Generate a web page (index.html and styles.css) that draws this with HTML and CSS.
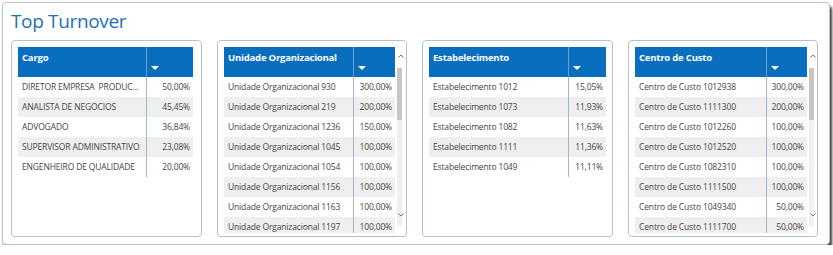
FILE: index.html
```html
<!DOCTYPE html>
<html lang="pt">
<head>
<meta charset="utf-8">
<title>Top Turnover</title>
<link rel="stylesheet" href="styles.css">
</head>
<body>
<div class="panel">
  <h1 class="title">Top Turnover</h1>
  <div class="cards">
    <section class="card c1">
      <div class="view">
        <div class="grid">
          <div class="hd name">Cargo</div><div class="hd sort"><span class="tri"></span></div>
          <div class="cell name">DIRETOR EMPRESA&nbsp; PRODUC...</div><div class="cell val">50,00%</div>
          <div class="cell name alt">ANALISTA DE NEGOCIOS</div><div class="cell val alt">45,45%</div>
          <div class="cell name">ADVOGADO</div><div class="cell val">36,84%</div>
          <div class="cell name alt">SUPERVISOR ADMINISTRATIVO</div><div class="cell val alt">23,08%</div>
          <div class="cell name">ENGENHEIRO DE QUALIDADE</div><div class="cell val">20,00%</div>
        </div>
      </div>
    </section>
    <section class="card c2">
      <div class="view">
        <div class="grid">
          <div class="hd name">Unidade Organizacional</div><div class="hd sort"><span class="tri"></span></div>
          <div class="cell name">Unidade Organizacional 930</div><div class="cell val">300,00%</div>
          <div class="cell name alt">Unidade Organizacional 219</div><div class="cell val alt">200,00%</div>
          <div class="cell name">Unidade Organizacional 1236</div><div class="cell val">150,00%</div>
          <div class="cell name alt">Unidade Organizacional 1045</div><div class="cell val alt">100,00%</div>
          <div class="cell name">Unidade Organizacional 1054</div><div class="cell val">100,00%</div>
          <div class="cell name alt">Unidade Organizacional 1156</div><div class="cell val alt">100,00%</div>
          <div class="cell name">Unidade Organizacional 1163</div><div class="cell val">100,00%</div>
          <div class="cell name alt">Unidade Organizacional 1197</div><div class="cell val alt">100,00%</div>
        </div>
      </div>
      <div class="sbar">
        <svg class="arrow" width="6" height="4" viewBox="0 0 6 4"><path d="M0.5 3.5 L3 1 L5.5 3.5" fill="none" stroke="#777" stroke-width="1"/></svg>
        <div class="track"><div class="thumb"></div>
          <svg class="arrow down" width="6" height="4" viewBox="0 0 6 4"><path d="M0.5 0.5 L3 3 L5.5 0.5" fill="none" stroke="#777" stroke-width="1"/></svg>
        </div>
      </div>
    </section>
    <section class="card c3">
      <div class="view">
        <div class="grid">
          <div class="hd name">Estabelecimento</div><div class="hd sort"><span class="tri"></span></div>
          <div class="cell name">Estabelecimento 1012</div><div class="cell val">15,05%</div>
          <div class="cell name alt">Estabelecimento 1073</div><div class="cell val alt">11,93%</div>
          <div class="cell name">Estabelecimento 1082</div><div class="cell val">11,63%</div>
          <div class="cell name alt">Estabelecimento 1111</div><div class="cell val alt">11,36%</div>
          <div class="cell name">Estabelecimento 1049</div><div class="cell val">11,11%</div>
        </div>
      </div>
    </section>
    <section class="card c4">
      <div class="view">
        <div class="grid">
          <div class="hd name">Centro de Custo</div><div class="hd sort"><span class="tri"></span></div>
          <div class="cell name">Centro de Custo 1012938</div><div class="cell val">300,00%</div>
          <div class="cell name alt">Centro de Custo 1111300</div><div class="cell val alt">200,00%</div>
          <div class="cell name">Centro de Custo 1012260</div><div class="cell val">100,00%</div>
          <div class="cell name alt">Centro de Custo 1012520</div><div class="cell val alt">100,00%</div>
          <div class="cell name">Centro de Custo 1082310</div><div class="cell val">100,00%</div>
          <div class="cell name alt">Centro de Custo 1111500</div><div class="cell val alt">100,00%</div>
          <div class="cell name">Centro de Custo 1049340</div><div class="cell val">50,00%</div>
          <div class="cell name alt">Centro de Custo 1111700</div><div class="cell val alt">50,00%</div>
        </div>
      </div>
      <div class="sbar">
        <svg class="arrow" width="6" height="4" viewBox="0 0 6 4"><path d="M0.5 3.5 L3 1 L5.5 3.5" fill="none" stroke="#777" stroke-width="1"/></svg>
        <div class="track"><div class="thumb"></div>
          <svg class="arrow down" width="6" height="4" viewBox="0 0 6 4"><path d="M0.5 0.5 L3 3 L5.5 0.5" fill="none" stroke="#777" stroke-width="1"/></svg>
        </div>
      </div>
    </section>
  </div>
</div>
</body>
</html>
```
FILE: styles.css
```css
* { box-sizing: border-box; }
html, body { margin: 0; padding: 0; background: #ffffff; }
body { font-family: "Open Sans", "Noto Sans", sans-serif; }

.panel {
  margin: 2px 0 0 2px;
  width: 828px;
  height: 243px;
  border: 1px solid #b9c3cf;
  border-radius: 4px;
  background: #fff;
  box-shadow: 2px 4px 3px rgba(0, 0, 0, 0.8);
  padding: 0 0 0 8px;
}

.title {
  margin: 0;
  padding: 6px 0 0 0;
  height: 37px;
  font-size: 19px;
  line-height: 24px;
  font-weight: 400;
  color: #1d6fc0;
  letter-spacing: -0.35px;
}

.cards {
  display: flex;
  gap: 15px;
}

.card {
  height: 197px;
  border: 1px solid #b4c0ce;
  border-radius: 4px;
  padding: 6px 0 3px 6px;
  display: flex;
  align-items: flex-start;
}
.c1 { width: 191px; }
.c2 { width: 190px; }
.c3 { width: 191px; }
.c4 { width: 190px; }

.view {
  height: 186px;
  overflow: hidden;
}

.grid {
  display: grid;
  grid-template-rows: 30px;
  grid-auto-rows: 20px;
  font-size: 8.5px;
  letter-spacing: -0.15px;
  color: #454545;
}
.c1 .grid { grid-template-columns: 128px 47px; }
.c2 .grid { grid-template-columns: 129px 42px; }
.c3 .grid { grid-template-columns: 139px 38px; }
.c4 .grid { grid-template-columns: 131px 41px; }

.hd {
  background: #0a6ebf;
  color: #fff;
  font-weight: 700;
  font-size: 9.5px;
  letter-spacing: -0.2px;
  line-height: 14px;
  padding: 4px 0 0 4px;
  white-space: nowrap;
}
.hd.sort {
  border-left: 1px solid #6a9fd4;
  position: relative;
}
.tri {
  position: absolute;
  left: 4px;
  bottom: 7px;
  width: 0;
  height: 0;
  border-left: 4px solid transparent;
  border-right: 4px solid transparent;
  border-top: 4px solid #fff;
}

.cell {
  line-height: 20px;
  white-space: nowrap;
  overflow: hidden;
}
.cell.name { padding-left: 4px; }
.cell.val {
  text-align: right;
  padding-right: 3px;
  border-left: 1px solid #a4b6ca;
}
.cell.alt { background: #efefef; }

.sbar {
  width: 10px;
  height: 186px;
  display: flex;
  flex-direction: column;
  align-items: center;
}
.arrow { display: block; margin-top: 7px; margin-left: 1px; }
.track {
  position: relative;
  margin-top: 10px;
  width: 5px;
  height: 158px;
  background: #f0f0f0;
  margin-left: -1px;
}
.thumb {
  width: 5px;
  height: 52px;
  background: #c6c6c6;
}
.arrow.down {
  position: absolute;
  left: 1px;
  bottom: 9px;
  margin: 0;
}
```
